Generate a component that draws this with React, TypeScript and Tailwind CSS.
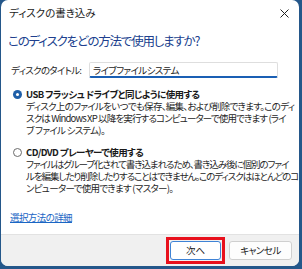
import React from 'react'

const FONT = "font-['Noto_Sans_CJK_JP',sans-serif] [font-feature-settings:'palt']"

const TRACK = {
  normal: 'whitespace-nowrap tracking-[-0.7px]',
  mid: 'whitespace-nowrap tracking-[-0.85px]',
  tight: 'whitespace-nowrap tracking-[-1.05px]',
}

type Line = { text: string; track?: keyof typeof TRACK }

function Radio({ checked }: { checked?: boolean }) {
  return checked ? (
    <span className="w-[9px] h-[9px] rounded-full bg-[#1f5fa8] flex items-center justify-center shrink-0">
      <span className="w-[3px] h-[3px] rounded-full bg-white" />
    </span>
  ) : (
    <span className="w-[9px] h-[9px] rounded-full border border-[#6b6b6b] bg-white shrink-0" />
  )
}

function Option({ checked, label, lines }: { checked?: boolean; label: string; lines: Line[] }) {
  return (
    <div>
      <div className="flex items-center gap-[4px] pl-[1px]">
        <Radio checked={checked} />
        <span className="text-[9.5px] leading-[12px] tracking-[-0.6px] font-bold text-[#1a1a1a] whitespace-nowrap">{label}</span>
      </div>
      <div className="pl-[14px] text-[9.5px] leading-[12px] text-[#262626]">
        {lines.map(l => (
          <p key={l.text} className={TRACK[l.track ?? 'normal']}>
            {l.text}
          </p>
        ))}
      </div>
    </div>
  )
}

export default function App() {
  return (
    <div className={`w-[302px] h-[269px] bg-[#24578a] pl-[1px] pr-[3px] pb-[3px] ${FONT}`}>
      <div className="h-full rounded-[7px] bg-white flex flex-col overflow-hidden">
        <div className="h-[26px] shrink-0 flex items-center justify-between pl-[8px] pr-[10px]">
          <span className="text-[10.5px] text-[#1a1a1a]">ディスクの書き込み</span>
          <svg width="9" height="9" viewBox="0 0 9 9" className="text-[#222]">
            <path d="M0.5 0.5L8.5 8.5M8.5 0.5L0.5 8.5" stroke="currentColor" strokeWidth="1" />
          </svg>
        </div>

        <div className="flex-1 px-[7px]">
          <h1 className="mt-[5px] text-[12.5px] leading-[20px] tracking-[-1.2px] text-[#203f8e] whitespace-nowrap">このディスクをどの方法で使用しますか?</h1>

          <div className="mt-[11px] flex items-center pl-[3px]">
            <span className="w-[78px] shrink-0 text-[9.5px] tracking-[-0.7px] text-[#262626] whitespace-nowrap">ディスクのタイトル:</span>
            <div className="w-[189px] h-[16px] border border-[#dedede] border-b-[#1a5fb4] border-b-2 rounded-[2px] pl-[3px] text-[9.5px] leading-[14px] tracking-[-0.6px] text-[#1a1a1a]">
              ライブファイルシステム
            </div>
          </div>

          <div className="mt-[10px] flex flex-col gap-[10px] pl-[4px]">
            <Option
              checked
              label="USB フラッシュ ドライブと同じように使用する"
              lines={[
                { text: 'ディスク上のファイルをいつでも保存、編集、および削除できます。このディ' },
                { text: 'スクは Windows XP 以降を実行するコンピューターで使用できます (ライ', track: 'mid' },
                { text: 'ブ ファイル システム)。' },
              ]}
            />
            <Option
              label="CD/DVD プレーヤーで使用する"
              lines={[
                { text: 'ファイルはグループ化されて書き込まれるため、書き込み後に個別のファイ', track: 'tight' },
                { text: 'ルを編集したり削除したりすることはできません。このディスクはほとんどのコ', track: 'tight' },
                { text: 'ンピューターで使用できます (マスター)。' },
              ]}
            />
          </div>

          <a className="block mt-[17px] pl-[2px] text-[9.5px] leading-[12px] tracking-[-0.6px] text-[#1a66c4] underline">選択方法の詳細</a>
        </div>

        <div className="h-[32px] shrink-0 bg-[#f0f0f0] border-t border-[#e2e2e2] flex items-center justify-end gap-[4px] pr-[7px]">
          <div className="border-[3px] border-[#e8101c] p-[1px]">
            <button className="w-[51px] h-[19px] rounded-[3px] border border-[#3f83d6] bg-white text-[9.5px] text-[#1a1a1a] flex items-center justify-center">
              次へ
            </button>
          </div>
          <button className="w-[63px] h-[19px] rounded-[3px] border border-[#cfcfcf] bg-[#fdfdfd] text-[9.5px] tracking-[-0.5px] text-[#1a1a1a] flex items-center justify-center">
            キャンセル
          </button>
        </div>
      </div>
    </div>
  )
}
